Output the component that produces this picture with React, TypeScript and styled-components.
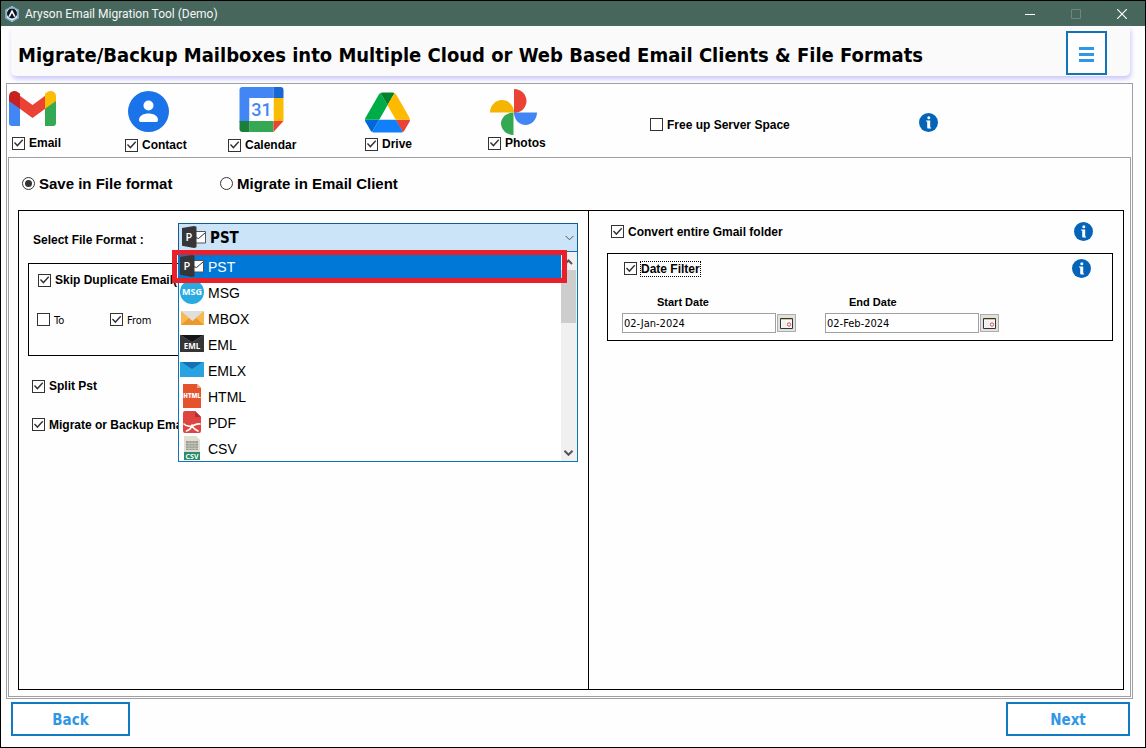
import React, { useState } from 'react';
import styled, { createGlobalStyle, css } from 'styled-components';

const arial = '"Liberation Sans", Arial, sans-serif';
const tahoma = 'Tahoma, "DejaVu Sans Condensed", "Noto Sans", sans-serif';
const segoe = '"Segoe UI", Roboto, sans-serif';

const GlobalStyle = createGlobalStyle`
  *, *::before, *::after { box-sizing: border-box; }
  body { margin: 0; background: #fff; color: #000; font-family: ${arial}; font-size: 12px; }
  button, input, select { font: inherit; color: inherit; margin: 0; }
`;

const Window = styled.div`
  display: flex;
  flex-direction: column;
  min-height: 100vh;
  border: 1px solid #000;
  background: #fefefe;
`;

const TitleBar = styled.header`
  display: flex;
  align-items: center;
  height: 25px;
  padding-left: 3px;
  background: #47675d;
  color: #f4f7f6;
  font-family: ${segoe};
  font-size: 12px;
`;

const AppName = styled.span`
  flex: 1;
  margin-left: 5px;
`;

const WindowButton = styled.button`
  display: grid;
  place-items: center;
  width: 46px;
  height: 25px;
  padding: 0;
  border: 0;
  background: transparent;
  color: #fff;
  &:disabled { color: #6d877f; }
`;

const Banner = styled.div`
  display: flex;
  align-items: center;
  height: 49px;
  margin: 1px 15px 7px 10px;
  padding: 0 23px 0 7px;
  border-radius: 0 0 5px 5px;
  background: #fafafb;
  box-shadow: 1px 3px 5px #c9c5fb;
`;

const Heading = styled.h1`
  flex: 1;
  margin: 0;
  padding-top: 7px;
  font-family: ${tahoma};
  font-size: 20px;
  line-height: 24px;
  font-weight: bold;
  white-space: nowrap;
`;

const MenuButton = styled.button`
  display: grid;
  place-items: center;
  width: 41px;
  height: 44px;
  margin-top: 3px;
  padding: 2px 0 0;
  border: 2px solid #1173b8;
  background: #fff;
`;

const Frame = styled.main`
  flex: 1;
  display: flex;
  flex-direction: column;
  margin: 0 12px 0 5px;
  border: 1px solid #9f9fa4;
`;

const Services = styled.div`
  display: grid;
  grid-template-columns: 116fr 103fr 137fr 123fr 162fr 269fr 213fr;
  height: 73px;
  padding-left: 2px;
`;

const Service = styled.div<{ $logoLeft: number; $logoTop: number; $labelLeft: number; $bottom: number }>`
  display: flex;
  flex-direction: column;
  justify-content: space-between;
  padding: ${p => p.$logoTop}px 0 ${p => p.$bottom}px;
  > svg { display: block; margin-left: ${p => p.$logoLeft}px; }
  > label { padding-left: ${p => p.$labelLeft}px; }
`;

const ServiceSlot = styled.div`
  display: flex;
  align-items: center;
  padding-top: 8px;
`;

const InfoSlot = styled.div`
  display: flex;
  align-items: center;
  padding-top: 4px;
`;

const CheckLabel = styled.label<{ $plain?: boolean; $focus?: boolean }>`
  display: inline-flex;
  align-items: center;
  gap: 4px;
  line-height: 15px;
  font-weight: bold;
  white-space: nowrap;
  span { padding-top: 1px; }
  ${p => p.$plain && css`
    font-family: ${tahoma};
    font-size: 11px;
    font-weight: normal;
  `}
  ${p => p.$focus && css`
    span { padding: 0; line-height: 14px; outline: 1px dotted #000; }
  `}
`;

const CheckBox = styled.input`
  appearance: none;
  flex: none;
  display: grid;
  width: 13px;
  height: 13px;
  border: 1px solid #333;
  background: #fff;
  &:checked::before {
    content: '';
    background: #333;
    clip-path: polygon(9% 50%, 18% 42%, 40% 64%, 84% 16%, 93% 25%, 40% 84%);
  }
`;

const Modes = styled.div`
  display: flex;
  height: 52px;
  padding: 0 0 2px 13px;
`;

const ModeLabel = styled.label`
  display: flex;
  align-items: center;
  gap: 4px;
  width: 198px;
  font-size: 15px;
  font-weight: bold;
  white-space: nowrap;
`;

const Radio = styled.input`
  appearance: none;
  flex: none;
  display: grid;
  place-items: center;
  width: 13px;
  height: 13px;
  border: 1px solid #333;
  border-radius: 50%;
  background: #fff;
  &:checked::before {
    content: '';
    width: 7px;
    height: 7px;
    border-radius: 50%;
    background: #333;
  }
`;

const Content = styled.section`
  flex: 1;
  display: flex;
  flex-direction: column;
  margin: 0 1px 1px;
  border: 1px solid #9f9fa4;
`;

const Panels = styled.div`
  flex: 1;
  display: grid;
  grid-template-columns: 570fr 534fr;
  margin: 0 6px 6px 9px;
  border: 1px solid #000;
`;

const LeftPanel = styled.div`
  padding: 12px 10px 0 9px;
  border-right: 1px solid #000;
`;

const RightPanel = styled.div`
  padding: 11px 10px 0 18px;
`;

const FormatRow = styled.div`
  display: flex;
  padding-left: 5px;
`;

const FormatLabel = styled.label`
  width: 145px;
  padding-top: 10px;
  line-height: 15px;
  font-weight: bold;
  white-space: nowrap;
`;

const Combo = styled.div`
  position: relative;
  flex: 1;
  display: grid;
  height: 29px;
  > svg { position: absolute; top: 3px; left: 4px; pointer-events: none; }
  > svg:last-of-type { top: 12px; left: auto; right: 4px; }
`;

const FormatSelect = styled.select`
  appearance: none;
  padding: 0 20px 0 31px;
  border: 1px solid #0f5f96;
  border-radius: 0;
  background: #cce4f7;
  font-family: ${tahoma};
  font-size: 15px;
  font-weight: bold;
`;

const Popup = styled.div`
  position: absolute;
  z-index: 1;
  top: 28px;
  left: 0;
  right: 0;
  display: flex;
  height: 211px;
  border: 1px solid #0f74b4;
  background: #fff;
`;

const Options = styled.ul`
  flex: 1;
  margin: 0;
  padding: 1px 0 0;
  overflow: hidden;
  list-style: none;
`;

const Option = styled.li<{ $selected: boolean }>`
  display: flex;
  align-items: center;
  gap: 4px;
  height: 26px;
  padding-left: 1px;
  font-size: 14px;
  line-height: 16px;
  background: ${p => (p.$selected ? '#0078d7' : 'transparent')};
  color: ${p => (p.$selected ? '#fff' : '#000')};
  span { padding-top: 2px; }
`;

const ScrollBar = styled.div`
  display: flex;
  flex-direction: column;
  width: 16px;
  padding: 1px 1px 0 0;
  background: #f0f0f0;
`;

const ScrollArrow = styled.button`
  display: grid;
  place-items: center;
  height: 17px;
  padding: 0;
  border: 0;
  background: transparent;
`;

const ScrollThumb = styled.div`
  height: 53px;
  background: #cdcdcd;
`;

const ScrollSpace = styled.div`
  flex: 1;
`;

const Highlight = styled.div`
  position: absolute;
  z-index: 2;
  top: 27px;
  left: -6px;
  right: 11px;
  height: 33px;
  border: 5px solid #e8202a;
  pointer-events: none;
`;

const DuplicateGroup = styled.div`
  height: 93px;
  margin-top: 11px;
  padding: 8px 9px;
  border: 1px solid #000;
`;

const DuplicateFields = styled.div`
  display: grid;
  grid-template-columns: 73px 1fr;
  justify-items: start;
  margin: 23px 0 0 -1px;
`;

const LeftOption = styled.div`
  padding: 22px 0 0 4px;
`;

const SpacedRow = styled.div<{ $end: number }>`
  display: flex;
  align-items: center;
  justify-content: space-between;
  padding-right: ${p => p.$end}px;
`;

const ConvertRow = styled(SpacedRow)`
  padding-left: 4px;
`;

const DateGroup = styled.div`
  height: 88px;
  margin-top: 12px;
  padding: 5px 0 0 14px;
  border: 1px solid #000;
`;

const FilterRow = styled(SpacedRow)`
  padding-left: 2px;
`;

const DateFields = styled.div`
  display: flex;
  gap: 29px;
  margin-top: 17px;
`;

const DateField = styled.div<{ $labelIndent: number }>`
  label {
    display: block;
    margin-bottom: 3px;
    padding-left: ${p => p.$labelIndent}px;
    font-size: 11px;
    line-height: 15px;
    font-weight: bold;
  }
`;

const DateInputRow = styled.div`
  display: flex;
  align-items: center;
  gap: 1px;
`;

const DateInput = styled.input`
  width: 154px;
  height: 20px;
  padding: 0 1px;
  border: 1px solid #a0a0a0;
  background: #fff;
  font-family: ${tahoma};
  font-size: 11px;
`;

const CalendarButton = styled.button`
  display: grid;
  place-items: center;
  width: 19px;
  height: 18px;
  padding: 0;
  border: 1px solid #adadad;
  background: #e1e1e1;
`;

const Footer = styled.footer`
  display: flex;
  justify-content: space-between;
  padding: 3px 15px 11px 10px;
`;

const NavButton = styled.button<{ $width: number }>`
  width: ${p => p.$width}px;
  height: 34px;
  padding: 2px 0 0;
  border: 2px solid #1279c4;
  background: #fff;
  color: #2f97e4;
  font-family: ${tahoma};
  font-size: 15px;
  font-weight: bold;
`;

const AppIcon = () => (
  <svg width="16" height="16" viewBox="0 0 16 16">
    <path d="M8 0l6.500 3.800v8.400L8 16l-6.500-3.800V3.800z" fill="#e6f1fa" />
    <path d="M8 .8l5.800 3.400v7.600L8 15.200l-5.800-3.400V4.200z" fill="none" stroke="#5b9bd3" strokeWidth="1" />
    <circle cx="8" cy="7.500" r="5" fill="#10151c" />
    <path d="M8 3.500l3.800 7.200H10L8 6.900l-2 3.800H4.200z" fill="#fff" />
  </svg>
);

const GmailLogo = () => (
  <svg width="47" height="36" viewBox="0 0 47 36">
    <path d="M0 9h11v26H3a3 3 0 0 1-3-3z" fill="#4285f4" />
    <path d="M36 9h11v23a3 3 0 0 1-3 3h-8z" fill="#34a853" />
    <path d="M10.500 4.500l13 9.500 13-9.500v13L23.500 27l-13-9.500z" fill="#ea4335" />
    <path d="M0 5.500C0 .5 5-1.500 9 1.200l2 1.600v15L0 10z" fill="#c5221f" />
    <path d="M47 5.500C47 .5 42-1.500 38 1.200l-2 1.600v15L47 10z" fill="#fbbc04" />
  </svg>
);

const ContactsLogo = () => (
  <svg width="41" height="41" viewBox="0 0 41 41">
    <circle cx="20.500" cy="20.500" r="20.500" fill="#1a73e8" />
    <circle cx="20.500" cy="14.500" r="5" fill="#fff" />
    <path d="M11 29c0-4.500 5-6.500 9.500-6.500S30 24.500 30 29c0 1.500-1 2-2 2H13c-1 0-2-.5-2-2z" fill="#fff" />
  </svg>
);

const CalendarLogo = () => (
  <svg width="45" height="45" viewBox="0 0 44 45">
    <path d="M3 0h31v11H10v24H0V3a3 3 0 0 1 3-3z" fill="#4285f4" />
    <path d="M34 0h7a3 3 0 0 1 3 3v8H34z" fill="#1967d2" />
    <path d="M34 11h10v23H34z" fill="#fbbc04" />
    <path d="M10 34h24v11H10z" fill="#34a853" />
    <path d="M0 34h10v11H3a3 3 0 0 1-3-3z" fill="#188038" />
    <path d="M34 34h10L34 45z" fill="#ea4335" />
    <path d="M10 11h24v23H10z" fill="#fff" />
    <text x="22" y="29" textAnchor="middle" fontFamily="Roboto, sans-serif" fontSize="18" fontWeight="500" fill="#4285f4">31</text>
  </svg>
);

const DriveLogo = () => (
  <svg width="45" height="41" viewBox="0 0 87.300 78">
    <path d="m6.600 66.850 3.850 6.650c.8 1.400 1.950 2.500 3.300 3.300l13.750-23.800h-27.500c0 1.550.4 3.100 1.200 4.500z" fill="#0066da" />
    <path d="m43.650 25-13.750-23.800c-1.350.8-2.500 1.900-3.300 3.300l-25.400 44a9.060 9.060 0 0 0-1.200 4.500h27.500z" fill="#00ac47" />
    <path d="m73.550 76.800c1.350-.8 2.500-1.900 3.300-3.300l1.600-2.750 7.650-13.250c.8-1.400 1.200-2.950 1.200-4.500h-27.500l5.850 11.500z" fill="#ea4335" />
    <path d="m43.650 25 13.750-23.800c-1.350-.8-2.900-1.200-4.500-1.200h-18.500c-1.600 0-3.150.45-4.500 1.200z" fill="#00832d" />
    <path d="m59.800 53h-32.300l-13.750 23.800c1.350.8 2.900 1.200 4.500 1.200h50.800c1.600 0 3.150-.45 4.500-1.200z" fill="#0f80fa" />
    <path d="m73.400 26.500-12.700-22c-.8-1.400-1.950-2.500-3.300-3.300l-13.750 23.800 16.150 28h27.450c0-1.550-.4-3.100-1.200-4.500z" fill="#ffba00" />
  </svg>
);

const PhotosLogo = () => (
  <svg width="47" height="46" viewBox="0 0 47 46">
    <path d="M24 0c7 0 12.500 5.500 12.500 12S31 24 24 24z" fill="#ea4335" />
    <path d="M47 23.500c0 7-5.500 12.500-11.500 12.500S24 31 24 23.500z" fill="#4285f4" />
    <path d="M23.500 46C16.500 46 11 40.500 11 34.500S16.500 23.500 23.500 23.500z" fill="#34a853" />
    <path d="M0 23.500C0 16.500 5.500 11 12 11s12 5.500 12 12.500z" fill="#f4b400" />
  </svg>
);

const InfoIcon = () => (
  <svg width="19" height="19" viewBox="0 0 19 19" role="img" aria-label="Information">
    <circle cx="9.500" cy="9.500" r="9.500" fill="#0563b8" />
    <circle cx="9.800" cy="4.800" r="1.500" fill="#fff" />
    <path d="M7 7.500h4.200v6.500c0 .6.300.8.900.8v.7H9.300c-.8 0-1.100-.4-1.100-1.200V8.400H7z" fill="#fff" />
  </svg>
);

const PstIcon = () => (
  <svg width="24" height="22" viewBox="0 0 24 22">
    <path d="M12 5.500h11.500v11.500H12z" fill="#fff" stroke="#555" />
    <path d="M13.500 11.500l3 1 6.500-5.500" fill="none" stroke="#333" strokeWidth="1" />
    <path d="M0 2L12 0l2.500.7v20.600L12 22 0 19.800z" fill="#363639" />
    <text x="7" y="15" textAnchor="middle" fontFamily="Open Sans, sans-serif" fontSize="11" fontWeight="600" fill="#fff">P</text>
  </svg>
);

const MsgIcon = () => (
  <svg width="24" height="24" viewBox="0 0 24 24">
    <circle cx="12" cy="12" r="12" fill="#29abe2" />
    <text x="12" y="15" textAnchor="middle" fontFamily="Open Sans, sans-serif" fontSize="9" fontWeight="700" fill="#fff">MSG</text>
  </svg>
);

const MboxIcon = () => (
  <svg width="24" height="24" viewBox="0 0 24 24">
    <path d="M1 5h23v14H1z" fill="#f2a73b" />
    <path d="M1 5l8 7-8 7zM24 5l-8 7 8 7z" fill="#f8b84e" />
    <path d="M1 19l9.500-8h4l9.500 8z" fill="#ea9a2c" />
    <path d="M1 5h23L12.500 15z" fill="#e1dfdc" />
  </svg>
);

const EmlIcon = () => (
  <svg width="24" height="24" viewBox="0 0 24 24">
    <path d="M0 3h24v17H0z" fill="#353538" />
    <path d="M1 3h22l-11 7z" fill="#151517" />
    <path d="M0 3l12 7.500L24 3" fill="none" stroke="#55555a" strokeWidth=".7" />
    <text x="12" y="17" textAnchor="middle" fontFamily="Open Sans, sans-serif" fontSize="8" fontWeight="700" fill="#fff">EML</text>
  </svg>
);

const EmlxIcon = () => (
  <svg width="24" height="24" viewBox="0 0 24 24">
    <path d="M0 4h24v15H0z" fill="#28a3e2" />
    <path d="M1.500 4h21L12 11z" fill="#1470b4" />
  </svg>
);

const HtmlIcon = () => (
  <svg width="24" height="24" viewBox="0 0 24 24">
    <path d="M3 0h14l4 4v20H3z" fill="#e5532d" />
    <path d="M17 0l4 4h-4z" fill="#f4a48c" />
    <text x="12" y="14" textAnchor="middle" fontFamily="Open Sans, sans-serif" fontSize="6" fontWeight="800" fill="#fff">HTML</text>
  </svg>
);

const PdfIcon = () => (
  <svg width="24" height="24" viewBox="0 0 24 24">
    <path d="M5 1h10l6 6v14a2 2 0 0 1-2 2H5a2 2 0 0 1-2-2V3a2 2 0 0 1 2-2z" fill="#e04440" />
    <path d="M15 1l6 6h-6z" fill="#b52e2d" />
    <path d="M4 14c2 2 6 3 9 1.500 3-1.500 5-2 7-1.500M6.500 21c3-1 5-4 5.500-6M12 15.500c1 2 3 4.500 6 5.500" fill="none" stroke="#fff" strokeWidth="1.600" strokeLinecap="round" />
  </svg>
);

const CsvIcon = () => (
  <svg width="24" height="24" viewBox="0 0 24 24">
    <path d="M4 0h12l4 4v13H4z" fill="#deded3" />
    <path d="M6 5h12v9H6z" fill="#9d9e94" />
    <path d="M6 7.500h12M6 10h12M6 12.500h12M9 5v9M12 5v9M15 5v9" stroke="#d2d2c7" strokeWidth=".6" />
    <path d="M4 16h16v8H4z" fill="#2c8c6b" />
    <text x="12" y="22.500" textAnchor="middle" fontFamily="Open Sans, sans-serif" fontSize="7" fontWeight="700" fill="#fff">CSV</text>
  </svg>
);

const DatePickerIcon = () => (
  <svg width="13" height="11" viewBox="0 0 13 11">
    <path d="M.5 .5h12v10H.5z" fill="#f8f8f8" stroke="#333" />
    <path d="M1 1.500h11" stroke="#d9c88e" />
    <path d="M3 3v7M5 3v7" stroke="#ddd" strokeWidth=".6" />
    <circle cx="9" cy="6.500" r="1.700" fill="none" stroke="#e0484a" />
  </svg>
);

const Chevron = ({ up, bold }: { up?: boolean; bold?: boolean }) => (
  <svg width="9" height="6" viewBox="0 0 9 6">
    <path d={up ? 'M1 5l3.500-3.500L8 5' : 'M.5 .8l4 4 4-4'} fill="none" stroke="#555" strokeWidth={bold ? 2 : 1} />
  </svg>
);

const services = [
  { name: 'Email', Logo: GmailLogo, left: 0, top: 7, labelLeft: 3, bottom: 6 },
  { name: 'Contact', Logo: ContactsLogo, left: 3, top: 7, labelLeft: 0, bottom: 4 },
  { name: 'Calendar', Logo: CalendarLogo, left: 11, top: 3, labelLeft: 0, bottom: 4 },
  { name: 'Drive', Logo: DriveLogo, left: 0, top: 8, labelLeft: 0, bottom: 5 },
  { name: 'Photos', Logo: PhotosLogo, left: 2, top: 5, labelLeft: 0, bottom: 6 },
];

const formats = [
  { name: 'PST', Icon: PstIcon },
  { name: 'MSG', Icon: MsgIcon },
  { name: 'MBOX', Icon: MboxIcon },
  { name: 'EML', Icon: EmlIcon },
  { name: 'EMLX', Icon: EmlxIcon },
  { name: 'HTML', Icon: HtmlIcon },
  { name: 'PDF', Icon: PdfIcon },
  { name: 'CSV', Icon: CsvIcon },
];

type CheckProps = { label: string; checked?: boolean; plain?: boolean; focus?: boolean };

const Check = ({ label, checked = true, plain, focus }: CheckProps) => (
  <CheckLabel $plain={plain} $focus={focus}>
    <CheckBox type="checkbox" defaultChecked={checked} />
    <span>{label}</span>
  </CheckLabel>
);

const DatePicker = ({ id, label, value, indent }: { id: string; label: string; value: string; indent: number }) => (
  <DateField $labelIndent={indent}>
    <label htmlFor={id}>{label}</label>
    <DateInputRow>
      <DateInput id={id} type="text" defaultValue={value} />
      <CalendarButton type="button" aria-label={`Choose ${label}`}><DatePickerIcon /></CalendarButton>
    </DateInputRow>
  </DateField>
);

export default function App() {
  const [format, setFormat] = useState('PST');
  const Current = formats.find(f => f.name === format)!.Icon;

  return (
    <>
      <GlobalStyle />
      <Window>
        <TitleBar>
          <AppIcon />
          <AppName>Aryson Email Migration Tool (Demo)</AppName>
          <WindowButton type="button" aria-label="Minimize">
            <svg width="10" height="10"><path d="M0 5.500h10" stroke="currentColor" /></svg>
          </WindowButton>
          <WindowButton type="button" aria-label="Maximize" disabled>
            <svg width="10" height="10"><path d="M.5 .5h9v9h-9z" fill="none" stroke="currentColor" /></svg>
          </WindowButton>
          <WindowButton type="button" aria-label="Close">
            <svg width="10" height="10"><path d="M0 0l10 10M10 0L0 10" stroke="currentColor" strokeWidth="1.200" /></svg>
          </WindowButton>
        </TitleBar>

        <Banner>
          <Heading>Migrate/Backup Mailboxes into Multiple Cloud or Web Based Email Clients &amp; File Formats</Heading>
          <MenuButton type="button" aria-label="Menu">
            <svg width="15" height="15"><path d="M0 1.500h15M0 7.500h15M0 13.500h15" stroke="#2f97e4" strokeWidth="3" /></svg>
          </MenuButton>
        </Banner>

        <Frame>
          <Services>
            {services.map(({ name, Logo, left, top, labelLeft, bottom }) => (
              <Service key={name} $logoLeft={left} $logoTop={top} $labelLeft={labelLeft} $bottom={bottom}>
                <Logo />
                <Check label={name} />
              </Service>
            ))}
            <ServiceSlot><Check label="Free up Server Space" checked={false} /></ServiceSlot>
            <InfoSlot><InfoIcon /></InfoSlot>
          </Services>

          <Content>
            <Modes>
              <ModeLabel><Radio type="radio" name="mode" defaultChecked />Save in File format</ModeLabel>
              <ModeLabel><Radio type="radio" name="mode" />Migrate in Email Client</ModeLabel>
            </Modes>

            <Panels>
              <LeftPanel>
                <FormatRow>
                  <FormatLabel htmlFor="format">Select File Format :</FormatLabel>
                  <Combo>
                    <FormatSelect id="format" value={format} onChange={e => setFormat(e.target.value)}>
                      {formats.map(f => <option key={f.name}>{f.name}</option>)}
                    </FormatSelect>
                    <Current />
                    <Chevron />
                    <Popup>
                      <Options role="listbox" aria-label="File formats">
                        {formats.map(({ name, Icon }) => (
                          <Option key={name} role="option" aria-selected={name === format} $selected={name === format} onClick={() => setFormat(name)}>
                            <Icon />
                            <span>{name}</span>
                          </Option>
                        ))}
                      </Options>
                      <ScrollBar>
                        <ScrollArrow type="button" aria-label="Scroll up"><Chevron up bold /></ScrollArrow>
                        <ScrollThumb />
                        <ScrollSpace />
                        <ScrollArrow type="button" aria-label="Scroll down"><Chevron bold /></ScrollArrow>
                      </ScrollBar>
                    </Popup>
                    <Highlight />
                  </Combo>
                </FormatRow>
                <DuplicateGroup>
                  <Check label="Skip Duplicate Email(s)" />
                  <DuplicateFields>
                    <Check label="To" checked={false} plain />
                    <Check label="From" plain />
                  </DuplicateFields>
                </DuplicateGroup>
                <LeftOption><Check label="Split Pst" /></LeftOption>
                <LeftOption><Check label="Migrate or Backup Emails" /></LeftOption>
              </LeftPanel>

              <RightPanel>
                <ConvertRow $end={20}>
                  <Check label="Convert entire Gmail folder" />
                  <InfoIcon />
                </ConvertRow>
                <DateGroup>
                  <FilterRow $end={21}>
                    <Check label="Date Filter" focus />
                    <InfoIcon />
                  </FilterRow>
                  <DateFields>
                    <DatePicker id="start" label="Start Date" value="02-Jan-2024" indent={35} />
                    <DatePicker id="end" label="End Date" value="02-Feb-2024" indent={24} />
                  </DateFields>
                </DateGroup>
              </RightPanel>
            </Panels>
          </Content>
        </Frame>

        <Footer>
          <NavButton type="button" $width={119}>Back</NavButton>
          <NavButton type="button" $width={124}>Next</NavButton>
        </Footer>
      </Window>
    </>
  );
}
